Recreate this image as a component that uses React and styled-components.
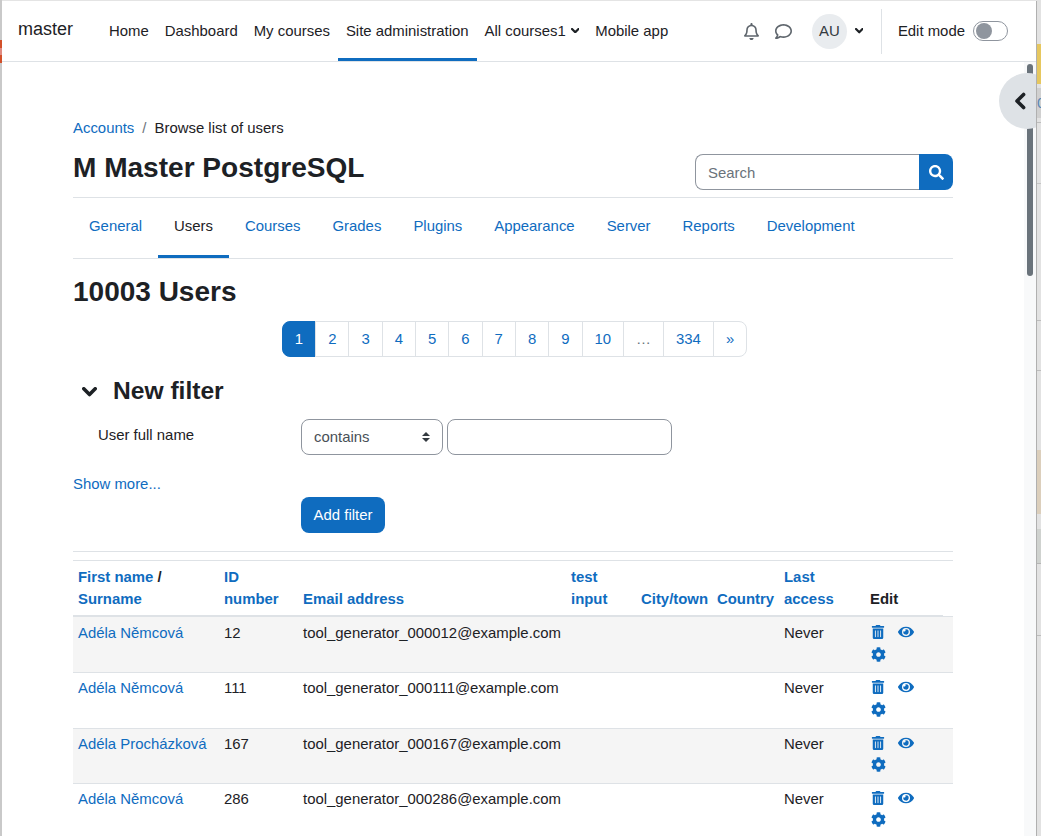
import React from "react";
import styled, { createGlobalStyle } from "styled-components";
import { FaRegBell, FaRegComment, FaSearch, FaTrashAlt, FaEye, FaCog } from "react-icons/fa";

const Global = createGlobalStyle`
  html, body { margin: 0; padding: 0; height: 100%; overflow: hidden; }
  body { font-family: "Liberation Sans", Arial, sans-serif; font-size: 14.91px; line-height: 22px; color: #1d2125; background: #e4e4e4; }
  * { box-sizing: border-box; }
`;

const Desktop = styled.div`
  display: flex;
  width: 1041px;
  height: 836px;
  overflow: hidden;
  background: #e4e4e4;
`;
const Strip = styled.div`
  display: flex;
  flex-direction: column;
  flex: none;
  width: ${(p) => p.$w}px;
  background: ${(p) => p.$bg};
  overflow: hidden;
`;
const Segment = styled.div`
  flex: none;
  height: ${(p) => p.$h}px;
  background: ${(p) => p.$c || "transparent"};
  font-size: 15px;
  line-height: ${(p) => p.$h}px;
  color: #5b87b5;
  white-space: nowrap;
`;
const Window = styled.div`
  position: relative;
  display: flex;
  flex-direction: column;
  flex: 1;
  min-width: 0;
  margin-top: 1px;
  background: #fff;
  overflow: hidden;
  border-right: 1px solid #b0b0b0;
`;
const NavBar = styled.header`
  display: flex;
  align-items: stretch;
  flex: none;
  height: 61px;
  padding: 0 28px 0 16px;
  border-bottom: 1px solid #dee2e6;
`;
const Brand = styled.div`
  align-self: center;
  width: 83px;
  margin-top: -3px;
  font-size: 18px;
  line-height: 27px;
`;
const NavItem = styled.a`
  display: flex;
  align-items: center;
  gap: 5px;
  height: 60px;
  padding: 2px 8px 0;
  color: #1d2125;
  border-bottom: 3px solid ${(p) => (p.$active ? "#0f6cbf" : "transparent")};
`;
const NavRight = styled.div`
  display: flex;
  align-items: center;
  margin-left: auto;
`;
const IconSlot = styled.span`
  display: flex;
  color: ${(p) => p.$c || "#5f666d"};
  margin-right: ${(p) => p.$mr || 0}px;
`;
const Avatar = styled.div`
  display: flex;
  align-items: center;
  justify-content: center;
  width: 35px;
  height: 35px;
  border-radius: 50%;
  background: #e9ecef;
  color: #343a40;
  margin-right: 8px;
`;
const Divider = styled.div`
  width: 1px;
  height: 45px;
  background: #dee2e6;
  margin: 0 16px 0 17.5px;
`;
const ToggleLabel = styled.span`
  margin-right: 8px;
`;
const Toggle = styled.span`
  display: flex;
  align-items: center;
  width: 35px;
  height: 20px;
  padding: 0 2px;
  border: 1px solid #8f959e;
  border-radius: 10px;
`;
const Knob = styled.span`
  width: 16px;
  height: 16px;
  border-radius: 50%;
  background: #8f959e;
`;
const Body = styled.div`
  display: flex;
  flex: 1;
  min-height: 0;
`;
const Main = styled.main`
  flex: 1;
  min-width: 0;
  padding: 55px 0 0 71px;
  overflow: hidden;
`;
const Column = styled.div`
  width: 880px;
`;
const Track = styled.div`
  flex: none;
  width: 12px;
  padding: 2px 3px 0;
  background: #f8f9fa;
`;
const Thumb = styled.div`
  width: 6px;
  height: 212px;
  border-radius: 3px;
  background: #6a737b;
`;
const DrawerToggle = styled.div`
  position: absolute;
  left: 997px;
  top: 72px;
  display: flex;
  align-items: center;
  justify-content: center;
  width: 56px;
  height: 56px;
  padding-right: 15px;
  border-radius: 50%;
  background: #dee2e6;
  color: #1d2125;
`;
const Crumbs = styled.nav`
  display: flex;
  gap: 8px;
`;
const Link = styled.a`
  color: #0f6cbf;
`;
const Sep = styled.span`
  color: #6a737b;
`;
const TitleRow = styled.div`
  display: flex;
  justify-content: space-between;
  align-items: flex-start;
  margin-top: 15px;
  padding-bottom: 7px;
  border-bottom: 1px solid #dee2e6;
`;
const Title = styled.h1`
  margin: 0;
  font-size: 28.05px;
  line-height: 28px;
  font-weight: 700;
`;
const SearchBox = styled.div`
  display: flex;
  width: 258px;
  height: 36px;
`;
const SearchInput = styled.div`
  flex: 1;
  padding: 7px 12px 0;
  border: 1px solid #8f959e;
  border-right: 0;
  border-radius: 8px 0 0 8px;
  color: #6a737b;
`;
const SearchButton = styled.div`
  display: flex;
  align-items: center;
  justify-content: center;
  width: 34px;
  background: #0f6cbf;
  color: #fff;
  border-radius: 0 8px 8px 0;
`;
const Tabs = styled.nav`
  display: flex;
  height: 61px;
  border-bottom: 1px solid #dee2e6;
`;
const Tab = styled.a`
  height: 60px;
  padding: 17px 16px 0;
  color: ${(p) => (p.$active ? "#1d2125" : "#0f6cbf")};
  border-bottom: 3px solid ${(p) => (p.$active ? "#0f6cbf" : "transparent")};
`;
const SubTitle = styled.h2`
  margin: 16px 0 0;
  font-size: 28px;
  line-height: 34px;
  font-weight: 700;
`;
const Pager = styled.nav`
  display: flex;
  justify-content: center;
  margin-top: 12px;
  padding-left: 3px;
`;
const Page = styled.a`
  display: block;
  height: 36px;
  margin-left: -1px;
  padding: 6px 12px;
  border: 1px solid ${(p) => (p.$active ? "#0f6cbf" : "#dee2e6")};
  background: ${(p) => (p.$active ? "#0f6cbf" : "#fff")};
  color: ${(p) => (p.$active ? "#fff" : p.$muted ? "#6a737b" : "#0f6cbf")};
  &:first-child { margin-left: 0; border-radius: 8px 0 0 8px; }
  &:last-child { border-radius: 0 8px 8px 0; }
`;
const FilterHead = styled.div`
  display: flex;
  align-items: center;
  margin-top: 20px;
`;
const FilterTitle = styled.h3`
  margin: 0;
  font-size: 24.6px;
  line-height: 28px;
  font-weight: 700;
`;
const ChevronSlot = styled.span`
  display: flex;
  width: 40px;
  padding: 3px 0 0 9px;
`;
const FilterRow = styled.div`
  display: flex;
  margin-top: 14px;
  padding-left: 25px;
`;
const FilterLabel = styled.label`
  width: 203px;
  padding-top: 5px;
`;
const SelectWrap = styled.div`
  position: relative;
  width: 142px;
  height: 36px;
  margin-right: 4px;
  padding: 6px 12px;
  border: 1px solid #8f959e;
  border-radius: 8px;
  color: #495057;
  &::before, &::after {
    content: "";
    position: absolute;
    right: 12px;
    border-left: 4px solid transparent;
    border-right: 4px solid transparent;
  }
  &::before { top: 12px; border-bottom: 4.5px solid #343a40; }
  &::after { top: 18px; border-top: 4.5px solid #343a40; }
`;
const TextField = styled.div`
  width: 225px;
  height: 36px;
  border: 1px solid #8f959e;
  border-radius: 8px;
`;
const ShowMore = styled.a`
  display: block;
  margin-top: 18px;
  color: #0f6cbf;
`;
const AddButton = styled.div`
  width: 84px;
  height: 36px;
  margin: 2px 0 0 228px;
  padding: 7px 0;
  text-align: center;
  color: #fff;
  background: #0f6cbf;
  border-radius: 8px;
`;
const Rule = styled.hr`
  margin: 18px 0 8px;
  border: 0;
  border-top: 1px solid #dee2e6;
`;
const Table = styled.table`
  width: 880px;
  table-layout: fixed;
  border-collapse: separate;
  border-spacing: 0;
  border-top: 1px solid #dee2e6;
`;
const Th = styled.th`
  padding: 5px;
  text-align: left;
  vertical-align: bottom;
  font-weight: 700;
  border-bottom: ${(p) => (p.$plain ? "1px solid #dee2e6" : "2px solid #dee2e6")};
  a { color: #0f6cbf; }
`;
const Tr = styled.tr`
  background: ${(p) => (p.$odd ? "#f5f5f5" : "#fff")};
`;
const Td = styled.td`
  height: 55.33px;
  padding: 4px 5px 5px;
  vertical-align: top;
  border-top: 1px solid #dee2e6;
  white-space: nowrap;
  tr:first-child > & { padding-top: 5px; border-top: 0; }
`;
const Actions = styled.div`
  display: grid;
  grid-template-columns: 16px 16px;
  grid-auto-rows: 22px;
  column-gap: 12px;
  margin-top: -1px;
  color: #0f6cbf;
  svg { align-self: center; justify-self: center; }
`;

const Chevron = ({ size = 10, weight = 3, left }) => (
  <svg width={size} height={left ? size * 1.5 : size * 0.7} viewBox={left ? "0 0 10 15" : "0 0 10 7"} fill="none">
    <polyline
      points={left ? "8,2 2.5,7.5 8,13" : "1.2,1.2 5,5 8.8,1.2"}
      stroke="currentColor"
      strokeWidth={weight}
      strokeLinecap="round"
      strokeLinejoin="round"
    />
  </svg>
);

const navs = ["Home", "Dashboard", "My courses"];
const tabs = ["General", "Users", "Courses", "Grades", "Plugins", "Appearance", "Server", "Reports", "Development"];
const pages = ["2", "3", "4", "5", "6", "7", "8", "9", "10"];
const rows = [
  ["Adéla Němcová", "12", "tool_generator_000012@example.com"],
  ["Adéla Němcová", "111", "tool_generator_000111@example.com"],
  ["Adéla Procházková", "167", "tool_generator_000167@example.com"],
  ["Adéla Němcová", "286", "tool_generator_000286@example.com"],
];
const widths = [146, 79, 268, 70, 76, 67, 86, 78, 10];

export default function App() {
  return (
    <Desktop>
      <Global />
      <Strip $w={2} $bg="#c9c9c9">
        <Segment $h={40} />
        <Segment $h={8} $c="#d2502a" />
        <Segment $h={7} $c="#e08a80" />
        <Segment $h={8} $c="#d2502a" />
      </Strip>
      <Window>
        <NavBar>
          <Brand>master</Brand>
          {navs.map((n) => <NavItem key={n}>{n}</NavItem>)}
          <NavItem $active>Site administration</NavItem>
          <NavItem>All courses1 <Chevron size={8.5} weight={2.6} /></NavItem>
          <NavItem>Mobile app</NavItem>
          <NavRight>
            <IconSlot $mr={15}><FaRegBell size={17} /></IconSlot>
            <IconSlot $mr={20}><FaRegComment size={17} /></IconSlot>
            <Avatar>AU</Avatar>
            <IconSlot $c="#1d2125"><Chevron size={8.5} weight={2.6} /></IconSlot>
            <Divider />
            <ToggleLabel>Edit mode</ToggleLabel>
            <Toggle><Knob /></Toggle>
          </NavRight>
        </NavBar>
        <Body>
          <Main>
            <Column>
              <Crumbs><Link>Accounts</Link><Sep>/</Sep><span>Browse list of users</span></Crumbs>
              <TitleRow>
                <Title>M Master PostgreSQL</Title>
                <SearchBox>
                  <SearchInput>Search</SearchInput>
                  <SearchButton><FaSearch size={15} /></SearchButton>
                </SearchBox>
              </TitleRow>
              <Tabs>
                {tabs.map((t) => <Tab key={t} $active={t === "Users"}>{t}</Tab>)}
              </Tabs>
              <SubTitle>10003 Users</SubTitle>
              <Pager>
                <Page $active>1</Page>
                {pages.map((p) => <Page key={p}>{p}</Page>)}
                <Page $muted>…</Page>
                <Page>334</Page>
                <Page>»</Page>
              </Pager>
              <FilterHead>
                <ChevronSlot><Chevron size={15} weight={2.4} /></ChevronSlot>
                <FilterTitle>New filter</FilterTitle>
              </FilterHead>
              <FilterRow>
                <FilterLabel>User full name</FilterLabel>
                <SelectWrap>contains</SelectWrap>
                <TextField />
              </FilterRow>
              <ShowMore>Show more...</ShowMore>
              <AddButton>Add filter</AddButton>
              <Rule />
              <Table>
                <colgroup>
                  {widths.map((w, i) => <col key={i} width={w} />)}
                </colgroup>
                <thead>
                  <tr>
                    <Th><a>First name</a> / <br /><a>Surname</a></Th>
                    <Th><a>ID<br />number</a></Th>
                    <Th><a>Email address</a></Th>
                    <Th><a>test<br />input</a></Th>
                    <Th><a>City/town</a></Th>
                    <Th><a>Country</a></Th>
                    <Th><a>Last<br />access</a></Th>
                    <Th>Edit</Th>
                    <Th $plain />
                  </tr>
                </thead>
                <tbody>
                  {rows.map((r, i) => (
                    <Tr key={r[1]} $odd={i % 2 === 0}>
                      <Td><Link>{r[0]}</Link></Td>
                      <Td>{r[1]}</Td>
                      <Td>{r[2]}</Td>
                      <Td />
                      <Td />
                      <Td />
                      <Td>Never</Td>
                      <Td colSpan={2}>
                        <Actions>
                          <FaTrashAlt size={14} />
                          <FaEye size={16} />
                          <FaCog size={15} />
                        </Actions>
                      </Td>
                    </Tr>
                  ))}
                </tbody>
              </Table>
            </Column>
          </Main>
          <Track><Thumb /></Track>
        </Body>
        <DrawerToggle><Chevron left size={12} weight={3} /></DrawerToggle>
      </Window>
      <Strip $w={4} $bg="#e2e2e2">
        <Segment $h={44} />
        <Segment $h={40} $c="#e6c75f" />
        <Segment $h={4} />
        <Segment $h={30} $c="#d0d0d0">0</Segment>
        <Segment $h={4} />
        <Segment $h={1} $c="#bdbdbd" />
        <Segment $h={60} />
        <Segment $h={1} $c="#c4c4c4" />
        <Segment $h={136} />
        <Segment $h={1} $c="#bdbdbd" />
        <Segment $h={49} />
        <Segment $h={1} $c="#bdbdbd" />
        <Segment $h={79} />
        <Segment $h={64} $c="#dccfbc" />
        <Segment $h={15} />
        <Segment $h={34} $c="#cfd2cf" />
        <Segment $h={1} $c="#b5b5b5" />
        <Segment $h={71} />
        <Segment $h={1} $c="#bdbdbd" />
      </Strip>
    </Desktop>
  );
}
